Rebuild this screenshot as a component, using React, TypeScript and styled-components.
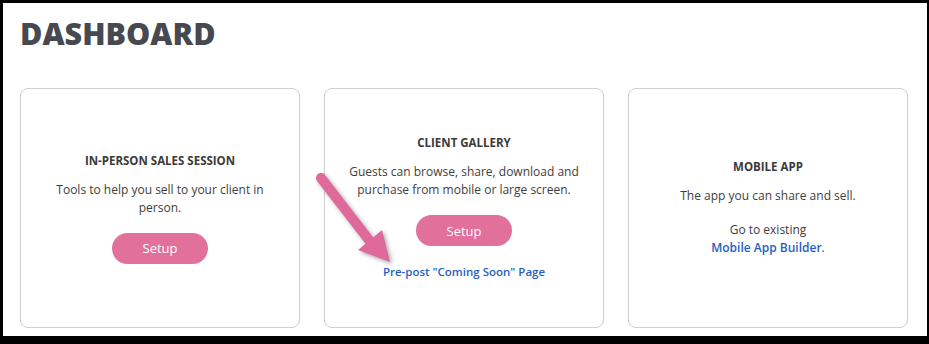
import React from 'react'
import styled, { createGlobalStyle } from 'styled-components'

const GlobalStyle = createGlobalStyle`
  html, body {
    margin: 0;
    padding: 0;
    background: #fff;
  }
  * { box-sizing: border-box; }
`;

export const Frame = styled.div`
  position: relative;
  width: 929px;
  height: 344px;
  border-style: solid;
  border-color: #000;
  border-width: 3px 2px 8px 3px;
  background: #fff;
  padding: 10px 0 0 17px;
  font-family: "Open Sans", "Liberation Sans", sans-serif;
`;

export const Title = styled.h1`
  margin: 0 0 35px 0;
  font-size: 30.5px;
  line-height: 40px;
  font-weight: 800;
  color: #46494f;
`;

export const Cards = styled.div`
  display: flex;
  gap: 24px;
`;

export const Card = styled.div`
  width: 280px;
  height: 240px;
  border: 1px solid #cfcfcf;
  border-radius: 8px;
  display: flex;
  flex-direction: column;
  align-items: center;
  justify-content: center;
  text-align: center;
  padding: 0 24px;
`;

export const CardTitle = styled.div`
  font-size: 11.5px;
  line-height: 16px;
  font-weight: 700;
  color: #3a3a3a;
  margin-bottom: 12px;
`;

export const Text = styled.p<{ $gap?: number }>`
  margin: 0 0 ${p => p.$gap ?? 0}px 0;
  font-size: 12px;
  line-height: 18px;
  color: #3e3e3e;
`;

export const Button = styled.button`
  margin-top: 16px;
  width: 96px;
  height: 31px;
  border: none;
  border-radius: 16px;
  background: #e1709b;
  color: #fff;
  font-family: inherit;
  font-size: 13px;
  cursor: pointer;
`;

export const LinkText = styled.a<{ $top?: number }>`
  display: block;
  margin-top: ${p => p.$top ?? 0}px;
  font-size: 11.5px;
  line-height: 18px;
  font-weight: 600;
  color: #1f5fc4;
  text-decoration: none;
`;

export const InlineLink = styled.a`
  color: #1f5fc4;
  font-weight: 600;
  text-decoration: none;
`;

export const Arrow = styled.svg`
  position: absolute;
  left: 297px;
  top: 157px;
  width: 100px;
  height: 110px;
  overflow: visible;
  filter: drop-shadow(2px 2px 2px rgba(0, 0, 0, 0.35));
`;

export default function App() {
  return (
    <>
      <GlobalStyle />
      <Frame>
        <Title>DASHBOARD</Title>
        <Cards>
          <Card>
            <CardTitle>IN-PERSON SALES SESSION</CardTitle>
            <Text>Tools to help you sell to your client in person.</Text>
            <Button>Setup</Button>
          </Card>
          <Card>
            <CardTitle>CLIENT GALLERY</CardTitle>
            <Text>Guests can browse, share, download and purchase from mobile or large screen.</Text>
            <Button>Setup</Button>
            <LinkText href="#" $top={17}>Pre-post "Coming Soon" Page</LinkText>
          </Card>
          <Card>
            <CardTitle>MOBILE APP</CardTitle>
            <Text $gap={16}>The app you can share and sell.</Text>
            <Text>
              Go to existing
              <br />
              <InlineLink href="#">Mobile App Builder</InlineLink>.
            </Text>
          </Card>
        </Cards>
        <Arrow viewBox="0 0 100 110">
          <line x1="21" y1="18" x2="72" y2="84" stroke="#e0699b" strokeWidth="10" strokeLinecap="round" />
          <polygon points="90,102 58,90 82,70" fill="#e0699b" />
        </Arrow>
      </Frame>
    </>
  )
}
